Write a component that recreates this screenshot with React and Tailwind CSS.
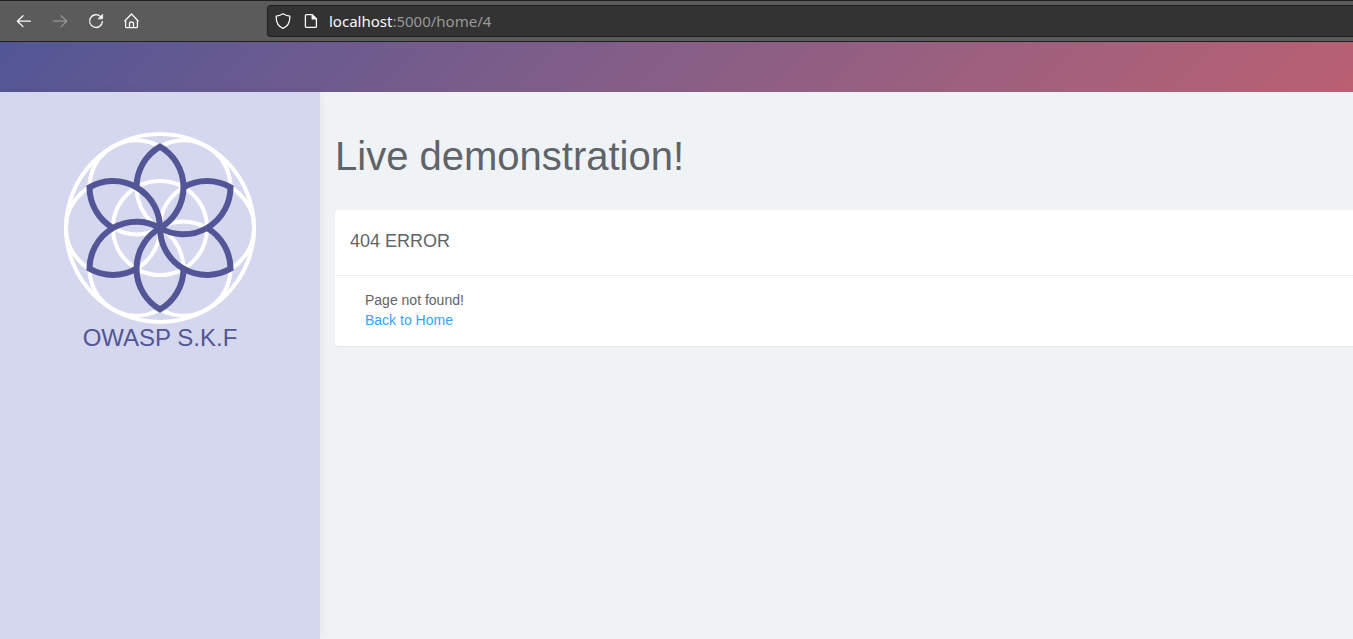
import React from "react";

const ROTATIONS = [0, 60, 120, 180, 240, 300];

function Logo() {
  return (
    <svg viewBox="-96 -96 192 192" className="block h-48 w-48" fill="none" role="img" aria-label="OWASP S.K.F logo">
      <g stroke="#ffffff" strokeWidth="4">
        <circle r="94" />
        <circle r="47" />
        {ROTATIONS.map((a) => (
          <circle key={a} cx="47" r="47" transform={`rotate(${a})`} />
        ))}
      </g>
      <g stroke="#525696" strokeWidth="6">
        {ROTATIONS.map((a) => (
          <path
            key={a}
            d="M-23.5 -40.7A47 47 0 0 1 0 -81.4A47 47 0 0 1 0 0"
            transform={`rotate(${a})`}
          />
        ))}
      </g>
    </svg>
  );
}

const iconProps = {
  viewBox: "0 0 16 16",
  className: "block h-4 w-4",
  fill: "none",
  stroke: "currentColor",
  strokeWidth: "1.3",
  strokeLinecap: "round",
  strokeLinejoin: "round",
  "aria-hidden": true,
};

function BrowserBar() {
  return (
    <div className="flex h-[42px] items-center border-y border-[#202020] bg-[#5b5b5b] pl-4 text-[#f9f9fa]">
      <nav className="flex w-[251px] shrink-0 items-center gap-5">
        <button type="button" aria-label="Back">
          <svg {...iconProps}>
            <path d="M14.4 8.2H1.6M7 2.8L1.4 8.2L7 13.6" />
          </svg>
        </button>
        <button type="button" aria-label="Forward" className="text-[#949494]" disabled>
          <svg {...iconProps}>
            <path d="M1.4 8.2H14.6M9.2 2.8L14.8 8.2L9.2 13.6" />
          </svg>
        </button>
        <button type="button" aria-label="Reload">
          <svg {...iconProps}>
            <path d="M12.4 3.4A6.4 6.4 0 1 0 14.4 8.6" />
            <path d="M14.6 1.6V5.8H10.4Z" fill="currentColor" strokeWidth="0.8" />
          </svg>
        </button>
        <button type="button" aria-label="Home">
          <svg {...iconProps}>
            <path d="M0.8 8L7.5 1L14.2 8M1.6 7.2V13.4Q1.6 14.6 2.8 14.6H12.2Q13.4 14.6 13.4 13.4V7.2" />
            <path d="M5.5 14.4V10.6Q5.5 9 7.5 9Q9.5 9 9.5 10.6V14.4" />
          </svg>
        </button>
      </nav>
      <div className="flex h-8 flex-1 items-center rounded-l border border-r-0 border-[#202020] bg-[#333333] pl-[7px]">
        <svg {...iconProps}>
          <path d="M8 0.8C6.2 2 3.6 2.8 1.2 3.2C0.9 9 3.2 13.4 8 15.4C12.8 13.4 15.1 9 14.8 3.2C12.4 2.8 9.8 2 8 0.8Z" />
        </svg>
        <svg {...iconProps} className="ml-3 block h-4 w-4">
          <path d="M9.4 1.6H3.4Q2.4 1.6 2.4 2.6V13.4Q2.4 14.4 3.4 14.4H12.4Q13.4 14.4 13.4 13.4V5.6" />
          <path d="M9.2 1.6V5.8H13.4Z" fill="currentColor" />
        </svg>
        <p className="ml-[10px] font-['Noto_Sans',sans-serif] text-[15px] leading-5">
          localhost<span className="text-[#999999]">:5000/home/4</span>
        </p>
      </div>
    </div>
  );
}

export default function App() {
  return (
    <div className="flex min-h-screen flex-col bg-[#eff3f6] font-['Liberation_Sans',Arial,sans-serif] text-sm leading-5 text-[#5f6468]">
      <BrowserBar />
      <header className="h-[50px] bg-linear-135 from-[#525696] to-[#ba6072]" />
      <div className="flex flex-1">
        <aside className="flex w-80 shrink-0 flex-col items-center bg-[#d5d7ee] pt-10 shadow-[1px_0_10px_rgba(0,0,0,0.05)]">
          <Logo />
          <p className="text-2xl leading-7 text-[#525696]">OWASP S.K.F</p>
        </aside>
        <main className="min-w-0 flex-1 pl-[15px]">
          <h1 className="pt-10 text-[40px] leading-[48px] font-normal">Live demonstration!</h1>
          <section className="mt-[30px] rounded-l bg-white shadow-[0_1px_1px_rgba(0,0,0,0.05)]">
            <h2 className="h-[66px] border-b border-[#e9ecf2] px-[15px] pt-5 text-lg leading-[22px] font-normal">
              404 ERROR
            </h2>
            <div className="px-[30px] pt-[14px] pb-4">
              <p>Page not found!</p>
              <a href="#home" className="text-[#30a5ff]">
                Back to Home
              </a>
            </div>
          </section>
        </main>
      </div>
    </div>
  );
}
